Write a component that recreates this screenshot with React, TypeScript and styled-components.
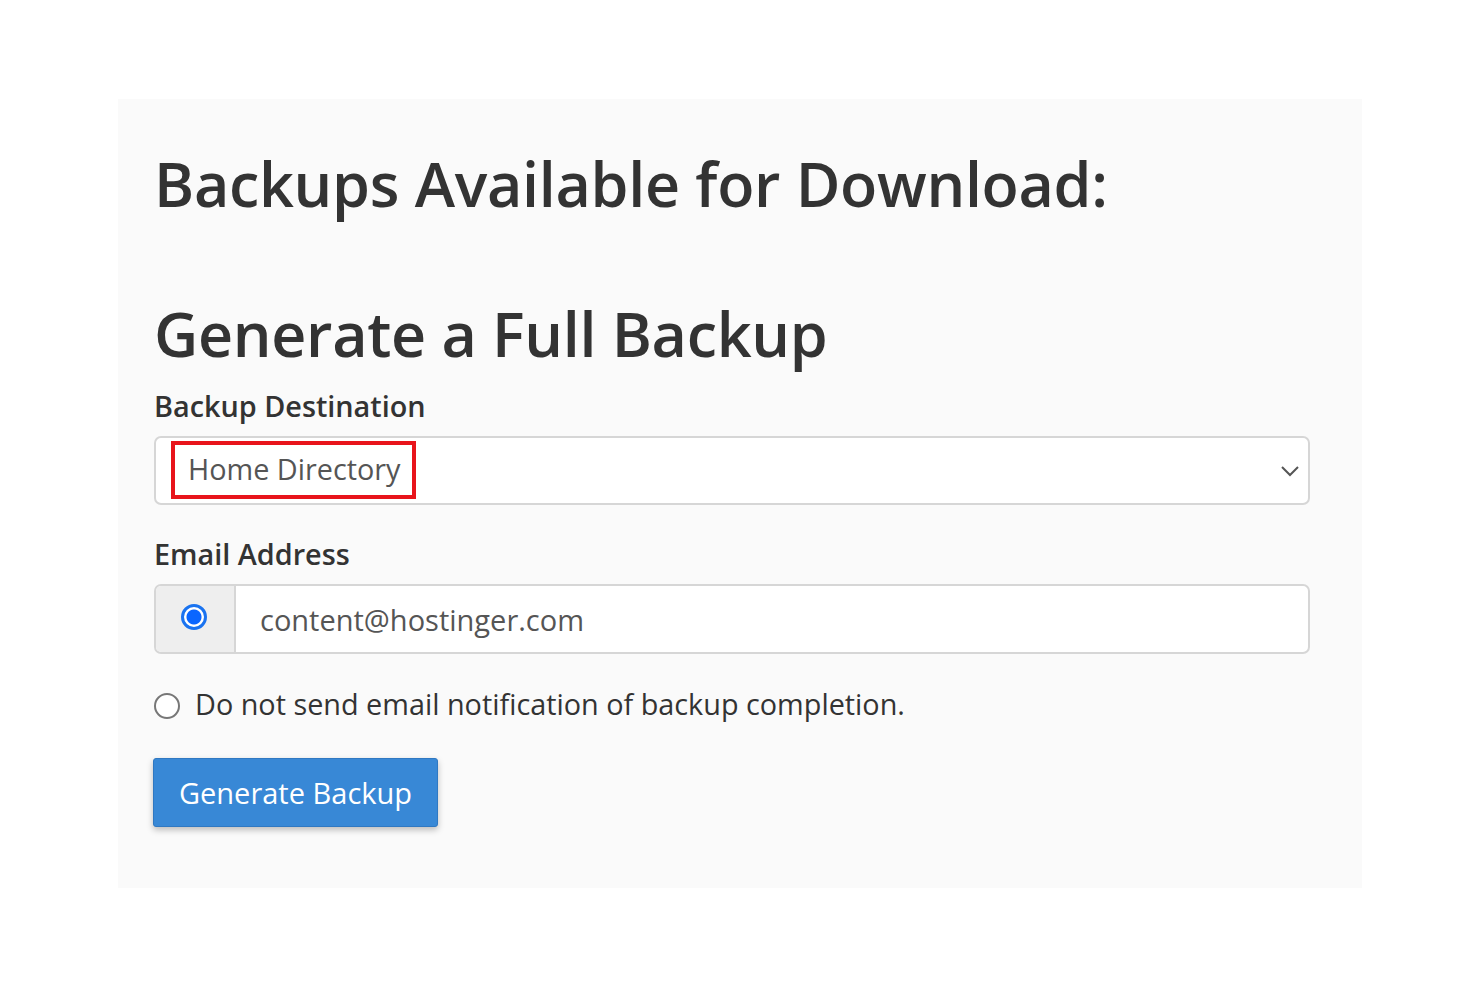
import React from "react";
import styled, { createGlobalStyle } from "styled-components";

const GlobalStyle = createGlobalStyle`
  html, body {
    margin: 0;
    padding: 0;
    background: #ffffff;
    font-family: "Open Sans", "Liberation Sans", sans-serif;
  }
`;

const App = () => {
  return (
    <Page>
      <GlobalStyle />
      <Panel>
        <Title>Backups Available for Download:</Title>
        <SubTitle>Generate a Full Backup</SubTitle>
        <Label $top={9}>Backup Destination</Label>
        <Select>
          <Highlight>Home Directory</Highlight>
          <svg width="20" height="12" viewBox="0 0 20 12">
            <path d="M2 2 L10 10 L18 2" fill="none" stroke="#555" strokeWidth="2" />
          </svg>
        </Select>
        <Label $top={29}>Email Address</Label>
        <InputGroup>
          <Addon>
            <Radio $checked />
          </Addon>
          <InputText>content@hostinger.com</InputText>
        </InputGroup>
        <Option>
          <Radio />
          <span>Do not send email notification of backup completion.</span>
        </Option>
        <Button>Generate Backup</Button>
      </Panel>
    </Page>
  );
};

export default App;

const Page = styled.div`
  padding: 99px 118px 0 118px;
`;
const Panel = styled.div`
  background: #fafafa;
  height: 789px;
  box-sizing: border-box;
  padding: 42px 52px 0 36px;
  display: flex;
  flex-direction: column;
  align-items: flex-start;
`;
const Title = styled.h1`
  margin: 0;
  font-size: 61px;
  font-weight: 600;
  color: #333;
  line-height: 86px;
  letter-spacing: -0.3px;
`;
const SubTitle = styled.h2`
  margin: 64px 0 0 0;
  font-size: 61px;
  font-weight: 600;
  color: #333;
  line-height: 86px;
  letter-spacing: -0.3px;
`;
const Label = styled.div<{ $top?: number }>`
  margin-top: ${(p) => p.$top ?? 0}px;
  font-size: 28.8px;
  font-weight: 600;
  color: #333;
  line-height: 40px;
`;
const Select = styled.div`
  margin-top: 10px;
  align-self: stretch;
  height: 69px;
  box-sizing: border-box;
  border: 2px solid #d6d6d6;
  border-radius: 7px;
  background: #fff;
  display: flex;
  align-items: center;
  justify-content: space-between;
  padding: 0 8px 0 15px;
`;
const Highlight = styled.span`
  margin-top: -1px;
  border: 4px solid #e8141b;
  padding: 3px 11px 6px 13px;
  font-size: 28.8px;
  color: #555;
  line-height: 41px;
`;
const InputGroup = styled.div`
  margin-top: 10px;
  align-self: stretch;
  height: 70px;
  box-sizing: border-box;
  border: 2px solid #d6d6d6;
  border-radius: 7px;
  background: #fff;
  display: flex;
  overflow: hidden;
`;
const Addon = styled.div`
  width: 78px;
  background: #eeeeee;
  border-right: 2px solid #d6d6d6;
  display: flex;
  align-items: center;
  justify-content: center;
`;
const InputText = styled.div`
  display: flex;
  align-items: center;
  padding-left: 24px;
  font-size: 29px;
  color: #555;
`;
const Radio = styled.span<{ $checked?: boolean }>`
  display: inline-block;
  box-sizing: border-box;
  width: 26px;
  height: 26px;
  border-radius: 50%;
  flex-shrink: 0;
  border: ${(p) => (p.$checked ? "3px solid #1a73f0" : "2px solid #777")};
  background: ${(p) =>
    p.$checked
      ? "radial-gradient(circle, #0a66ff 0 7px, #fff 8px)"
      : "#fff"};
  margin-top: ${(p) => (p.$checked ? "-4px" : "4px")};
  margin-left: ${(p) => (p.$checked ? "-3px" : "0")};
`;
const Option = styled.div`
  margin-top: 30px;
  display: flex;
  align-items: center;
  gap: 15px;
  font-size: 28.8px;
  color: #333;
  line-height: 40px;
`;
const Button = styled.div`
  margin-top: 34px;
  width: 285px;
  height: 69px;
  box-sizing: border-box;
  background: #3888d6;
  border: 1px solid #2f78c2;
  border-radius: 3px;
  box-shadow: 0 3px 6px rgba(0, 0, 0, 0.25);
  color: #fff;
  font-size: 29px;
  display: flex;
  align-items: center;
  justify-content: center;
  margin-left: -1px;
`;
